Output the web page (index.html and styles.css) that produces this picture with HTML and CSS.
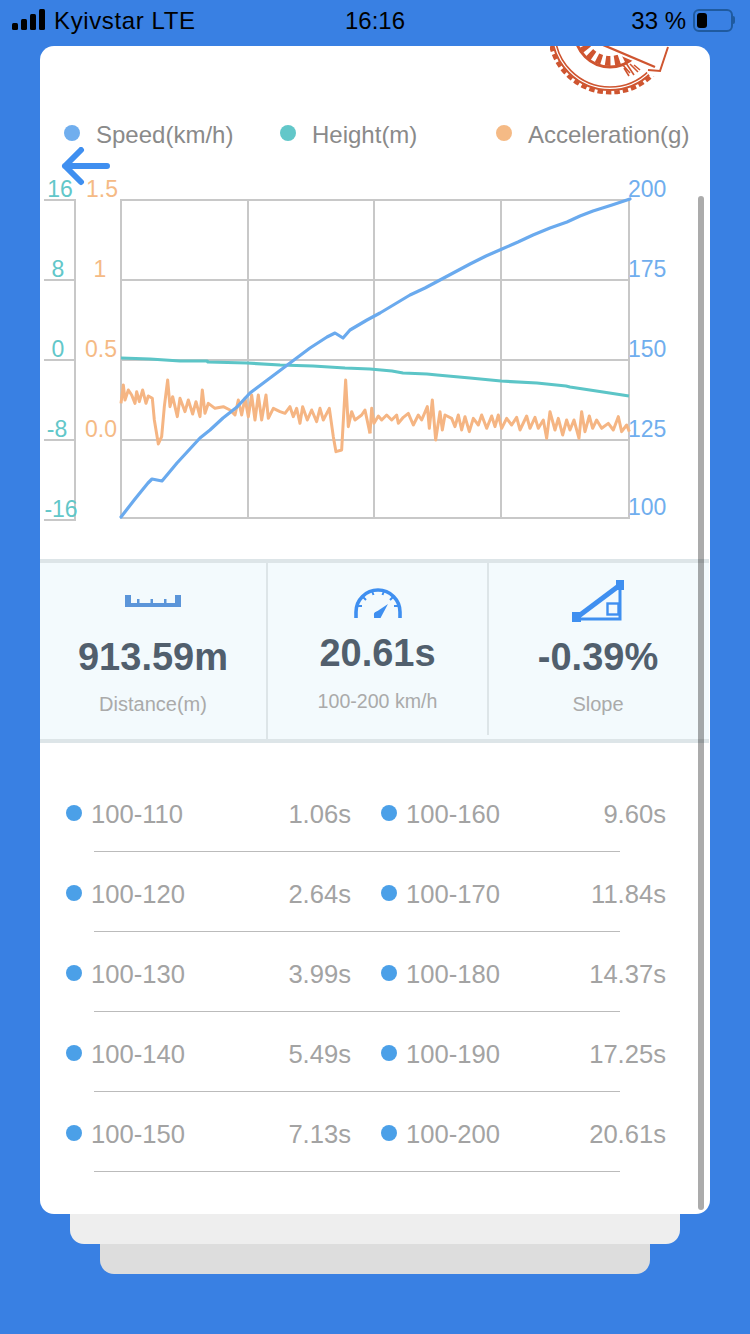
FILE: index.html
```html
<!DOCTYPE html>
<html lang="en">
<head>
<meta charset="utf-8">
<title>Run result</title>
<link rel="stylesheet" href="styles.css">
</head>
<body>
<header class="status">
  <div class="status-left">
    <span class="signal"><i class="b1"></i><i class="b2"></i><i class="b3"></i><i class="b4"></i></span>
    <span class="carrier">Kyivstar LTE</span>
  </div>
  <div class="clock">16:16</div>
  <div class="status-right">
    <span class="percent">33 %</span>
    <span class="battery"><i class="battery-fill"></i></span>
    <i class="battery-nub"></i>
  </div>
</header>

<main class="card">
  <svg class="stamp" viewBox="550 46 130 50" aria-hidden="true">
    <circle class="st-serr" cx="610" cy="32" r="60.5"/>
    <circle class="st-ring" cx="610" cy="32" r="58"/>
    <circle class="st-thin" cx="610" cy="32" r="55"/>
    <circle class="st-inner" cx="610" cy="32" r="35"/>
    <circle class="st-rays" cx="610" cy="32" r="29"/>
    <path class="st-band" d="M596 40 L600 40 L680 40 L680 76 L650 76 L640 64 L600 47 Z"/>
    <path class="st-line" d="M603 45 L655 67"/>
    <path class="st-line2" d="M668 47 L660 71 L648 70"/>
    <path class="st-frag" d="M622 64 L630 73 M626 63 L634 75 M630 64 L638 72 M634 65 L640 70 M624 68 L629 76"/>
  </svg>

  <svg class="arrow" viewBox="0 0 50 40" aria-hidden="true">
    <path class="arrow-path" d="M46 19 H4 M20 3 L4 19 L20 35"/>
  </svg>

  <div class="legend">
    <div class="legend-item"><i class="legend-dot dot-speed"></i><span>Speed(km/h)</span></div>
    <div class="legend-item"><i class="legend-dot dot-height"></i><span>Height(m)</span></div>
    <div class="legend-item"><i class="legend-dot dot-acc"></i><span>Acceleration(g)</span></div>
  </div>

  <svg class="chart" viewBox="40 150 670 385" role="img" aria-label="Speed, height and acceleration chart">
    <defs>
      <filter id="soft" x="100" y="180" width="550" height="350" filterUnits="userSpaceOnUse">
        <feGaussianBlur stdDeviation="0.55"/>
      </filter>
    </defs>
    <path class="grid" d="M44 200H75M44 280H75M44 360H75M44 440H75M44 520H75M75 199V521"/>
    <path class="grid" d="M120 200H630M120 280H630M120 360H630M120 440H630M120 518H630M121 199V519M248 199V519M374 199V519M501 199V519M629 199V519"/>

    <text class="ax-teal" x="60" y="197" text-anchor="middle">16</text>
    <text class="ax-teal" x="58" y="277" text-anchor="middle">8</text>
    <text class="ax-teal" x="58" y="357" text-anchor="middle">0</text>
    <text class="ax-teal" x="57" y="437" text-anchor="middle">-8</text>
    <text class="ax-teal" x="61" y="517" text-anchor="middle">-16</text>

    <text class="ax-orange" x="86" y="197">1.5</text>
    <text class="ax-orange" x="100" y="277" text-anchor="middle">1</text>
    <text class="ax-orange" x="85" y="357">0.5</text>
    <text class="ax-orange" x="85" y="437">0.0</text>

    <text class="ax-blue" x="628" y="197">200</text>
    <text class="ax-blue" x="628" y="277">175</text>
    <text class="ax-blue" x="628" y="357">150</text>
    <text class="ax-blue" x="628" y="437">125</text>
    <text class="ax-blue" x="628" y="515">100</text>

    <g class="soft">
      <g transform="translate(120 340) scale(0.3333)">
        <polyline class="line-acc" points="3,190 10,135 15,180 25,150 35,165 45,190 50,155 58,185 68,150 78,190 85,168 97,175 103,240 115,312 125,290 133,200 143,120 150,200 158,170 172,230 180,175 195,215 205,180 218,222 228,185 240,230 247,150 255,220 265,190 285,205 310,200 330,210 345,225 355,180 365,225 375,175 385,230 395,165 405,240 415,165 425,240 438,165 445,235 460,205 480,215 495,220 510,200 520,230 530,205 540,250 548,200 562,240 575,210 590,245 600,205 610,240 628,205 640,290 648,335 665,330 677,120 685,260 695,215 705,240 725,225 735,210 750,280"/>
      </g>
      <g transform="translate(370 340) scale(0.3333)">
        <polyline class="line-acc" points="0,280 5,205 12,250 25,228 35,240 50,225 65,240 80,225 85,250 100,232 115,220 130,255 145,225 155,240 172,200 178,265 187,180 197,300 210,215 217,270 225,225 245,235 255,260 265,225 275,270 285,230 298,275 310,235 325,255 335,225 350,265 365,228 375,260 385,225 395,265 410,235 425,255 440,232 450,270 470,228 480,265 495,232 505,265 520,240 530,295 540,215 555,270 565,235 578,285 590,240 600,270 612,240 627,295 635,215 645,275 658,228 668,265 680,240 695,265 715,250 730,270 745,230 755,275 770,255 778,275"/>
      </g>
      <polyline class="line-height" points="121,358 150,359 180,361 207,361 208,362 247,363 280,365 313,366 345,368 370,369 381,370 392,371 403,373 427,374 437,375 470,378 501,381 537,383 566,386 570,387 603,392 629,396"/>
      <polyline class="line-speed" points="121,517 135,499 148,483 152,479 162,481 177,463 200,438 210,430 223,418 237,407 250,393 270,378 290,363 310,348 327,337 335,333 343,338 350,330 367,320 380,313 395,304 410,295 425,288 440,280 455,272 470,264 486,256 502,249 518,242 533,235 550,228 567,222 580,216 593,211 612,205 630,199"/>
    </g>
  </svg>

  <section class="stats">
    <div class="stat">
      <div class="stat-icon">
        <svg class="icon-ruler" viewBox="0 0 56 12" aria-hidden="true">
          <path class="ruler-path" d="M0 0H6V8H12V4H14.5V8H25.5V4H28V8H39V4H41.5V8H50V0H56V12H0Z"/>
        </svg>
      </div>
      <div class="stat-value">913.59m</div>
      <div class="stat-label">Distance(m)</div>
    </div>
    <div class="stat stat-mid">
      <div class="stat-icon">
        <svg class="icon-gauge" viewBox="0 0 48 30" aria-hidden="true">
          <path class="gauge-arc" d="M2 30 V24 A22 22 0 0 1 46 24 V30"/>
          <path class="gauge-tick" d="M3.5 18H8M9 9L12 12M18 3L19.5 7M30 3L28.5 7M39 9L36 12M44.5 18H40"/>
          <path class="gauge-needle" d="M34 16 L26.5 30 L20 30 L20.5 25 Z"/>
          <circle class="gauge-needle" cx="23.5" cy="27" r="3.6"/>
        </svg>
      </div>
      <div class="stat-value">20.61s</div>
      <div class="stat-label">100-200 km/h</div>
    </div>
    <div class="stat stat-last">
      <div class="stat-icon">
        <svg class="icon-slope" viewBox="0 0 52 42" aria-hidden="true">
          <path class="slope-diag" d="M4 38 L48 5"/>
          <path class="slope-line" d="M48 5 V39 H4"/>
          <rect class="slope-box" x="35.5" y="23.5" width="11" height="11"/>
          <rect class="slope-cap" x="0" y="32" width="9" height="10"/>
          <rect class="slope-cap" x="44" y="0" width="8" height="10"/>
        </svg>
      </div>
      <div class="stat-value">-0.39%</div>
      <div class="stat-label">Slope</div>
    </div>
  </section>

  <section class="splits">
    <div class="split-row">
      <div class="split-cells">
        <div class="split"><i class="split-dot"></i><span>100-110</span><b>1.06s</b></div>
        <div class="split"><i class="split-dot"></i><span>100-160</span><b>9.60s</b></div>
      </div>
      <div class="split-line"></div>
    </div>
    <div class="split-row">
      <div class="split-cells">
        <div class="split"><i class="split-dot"></i><span>100-120</span><b>2.64s</b></div>
        <div class="split"><i class="split-dot"></i><span>100-170</span><b>11.84s</b></div>
      </div>
      <div class="split-line"></div>
    </div>
    <div class="split-row">
      <div class="split-cells">
        <div class="split"><i class="split-dot"></i><span>100-130</span><b>3.99s</b></div>
        <div class="split"><i class="split-dot"></i><span>100-180</span><b>14.37s</b></div>
      </div>
      <div class="split-line"></div>
    </div>
    <div class="split-row">
      <div class="split-cells">
        <div class="split"><i class="split-dot"></i><span>100-140</span><b>5.49s</b></div>
        <div class="split"><i class="split-dot"></i><span>100-190</span><b>17.25s</b></div>
      </div>
      <div class="split-line"></div>
    </div>
    <div class="split-row">
      <div class="split-cells">
        <div class="split"><i class="split-dot"></i><span>100-150</span><b>7.13s</b></div>
        <div class="split"><i class="split-dot"></i><span>100-200</span><b>20.61s</b></div>
      </div>
      <div class="split-line"></div>
    </div>
  </section>

  <div class="scrollbar"></div>
</main>
<div class="layer layer-one"></div>
<div class="layer layer-two"></div>
</body>
</html>
```
FILE: styles.css
```css
* { box-sizing: border-box; }
html, body { margin: 0; padding: 0; }
body {
  width: 750px;
  height: 1334px;
  overflow: hidden;
  background: #3980e3;
  font-family: "Liberation Sans", Arial, sans-serif;
}
i { display: block; font-style: normal; }

/* status bar */
.status {
  height: 46px;
  position: relative;
  display: flex;
  justify-content: space-between;
  padding: 9px 15px 0 12px;
  color: #000;
  font-size: 24px;
  line-height: 24px;
}
.status-left { display: flex; align-items: flex-start; }
.signal { display: flex; align-items: flex-end; gap: 3px; height: 21px; width: 33px; }
.signal i { width: 6px; background: #000; border-radius: 1.5px; }
.b1 { height: 7px; }
.b2 { height: 11px; }
.b3 { height: 16px; }
.b4 { height: 21px; }
.carrier { margin-left: 9px; letter-spacing: 0.62px; }
.clock { position: absolute; left: 345px; top: 9px; }
.status-right { display: flex; align-items: flex-start; }
.percent { margin-right: 7px; }
.battery {
  width: 40px;
  height: 23px;
  border: 2px solid #1f5a9f;
  border-radius: 6px;
  padding: 2px;
}
.battery-fill { width: 10px; height: 15px; background: #000; border-radius: 3px; }
.battery-nub { width: 2px; height: 8px; margin-top: 7px; background: #1f5a9f; border-radius: 0 2px 2px 0; }

/* main card */
.card {
  position: relative;
  z-index: 3;
  width: 670px;
  height: 1168px;
  margin-left: 40px;
  padding-top: 74px;
  background: #fff;
  border-radius: 14px;
  overflow: hidden;
}
.stamp { position: absolute; left: 510px; top: 0; width: 130px; height: 50px; }
.st-serr { fill: none; stroke: #cf5530; stroke-width: 4; stroke-dasharray: 5.5 3; }
.st-ring { fill: none; stroke: #cf5530; stroke-width: 2; }
.st-thin { fill: none; stroke: #cf5530; stroke-width: 1.6; }
.st-inner { fill: none; stroke: #cf5530; stroke-width: 3; }
.st-rays { fill: none; stroke: #cf5530; stroke-width: 10; stroke-dasharray: 5 4; }
.st-band { fill: #fff; }
.st-line { fill: none; stroke: #cf5530; stroke-width: 2.4; }
.st-line2 { fill: none; stroke: #cf5530; stroke-width: 2; }
.st-frag { fill: none; stroke: #cf5530; stroke-width: 1.6; }

.arrow { position: absolute; left: 21px; top: 101px; width: 50px; height: 40px; }
.arrow-path { fill: none; stroke: #3f8ff0; stroke-width: 6; stroke-linecap: round; stroke-linejoin: round; }

.legend {
  display: grid;
  grid-template-columns: 216px 216px 216px;
  padding-left: 24px;
  font-size: 24px;
  line-height: 30px;
  color: #8a8a8a;
}
.legend-item { display: flex; align-items: center; gap: 16px; white-space: nowrap; }
.legend-dot { width: 16px; height: 16px; border-radius: 50%; margin-top: -4px; }
.dot-speed { background: #70aeee; }
.dot-height { background: #62c7c9; }
.dot-acc { background: #f5ba85; }

/* chart */
.chart { display: block; width: 670px; height: 385px; }
.grid { fill: none; stroke: #c8c8c8; stroke-width: 2; }
.ax-teal, .ax-orange, .ax-blue { font-size: 23px; }
.ax-teal { fill: #62c7c9; }
.ax-orange { fill: #f5ba85; }
.ax-blue { fill: #70aeee; }
.soft { filter: url(#soft); }
.line-acc { fill: none; stroke: #f5b583; stroke-width: 9; stroke-linejoin: round; }
.line-height { fill: none; stroke: #5cc5c7; stroke-width: 3.2; stroke-linejoin: round; }
.line-speed { fill: none; stroke: #6aaaee; stroke-width: 3.2; stroke-linejoin: round; stroke-linecap: round; }

/* stats band */
.stats {
  display: grid;
  grid-template-columns: 226px 221px 222px;
  width: 669px;
  height: 184px;
  margin-top: 24px;
  background: #f3fafd;
  border-top: 4px solid #dde5e8;
  border-bottom: 4px solid #dde5e8;
}
.stat {
  display: flex;
  flex-direction: column;
  align-items: center;
  padding-top: 16px;
}
.stat-mid { border-left: 2px solid #dde5e8; }
.stat-last { position: relative; }
.stat-last::before {
  content: "";
  position: absolute;
  left: 0;
  top: 0;
  width: 2px;
  height: 172px;
  background: #dde5e8;
}
.stat-icon { height: 43px; display: flex; align-items: center; justify-content: center; }
.stat-value {
  margin-top: 14px;
  font-size: 38px;
  line-height: 42px;
  font-weight: 700;
  color: #515f6d;
}
.stat-mid .stat-value { margin-top: 10px; }
.stat-label {
  margin-top: 14px;
  font-size: 20px;
  line-height: 24px;
  color: #aaa;
}
.stat-mid .stat-label { margin-top: 15px; font-size: 19.6px; }
.icon-ruler { display: block; width: 56px; height: 12px; }
.ruler-path { fill: #5b95d9; }
.icon-gauge { display: block; width: 48px; height: 30px; margin-top: 4px; }
.gauge-arc { fill: none; stroke: #3f8ff0; stroke-width: 3.6; }
.gauge-tick { fill: none; stroke: #3f8ff0; stroke-width: 2; }
.gauge-needle { fill: #3f8ff0; }
.icon-slope { display: block; width: 52px; height: 42px; }
.slope-diag { fill: none; stroke: #3f8ff0; stroke-width: 5; }
.slope-line { fill: none; stroke: #3f8ff0; stroke-width: 3; }
.slope-box { fill: none; stroke: #3f8ff0; stroke-width: 2.4; }
.slope-cap { fill: #3f8ff0; }

/* split times */
.splits { padding-top: 56px; }
.split-row { height: 80px; }
.split-cells {
  display: grid;
  grid-template-columns: 285px 285px;
  gap: 30px;
  margin-left: 26px;
}
.split {
  display: flex;
  align-items: center;
  height: 30px;
  font-size: 25.6px;
  line-height: 30px;
  color: #a3a3a3;
}
.split b { font-weight: 400; margin-left: auto; }
.split-dot {
  width: 16px;
  height: 16px;
  margin: -2px 9px 0 0;
  border-radius: 50%;
  background: #4ba0e8;
}
.split-line { height: 1px; margin: 22px 90px 0 54px; background: #bbb; }

.scrollbar {
  position: absolute;
  left: 658px;
  top: 150px;
  width: 6px;
  height: 1014px;
  border-radius: 3px;
  background: rgba(0, 0, 0, 0.33);
}

/* stacked cards behind */
.layer { position: relative; height: 30px; border-radius: 0 0 14px 14px; }
.layer-one { z-index: 2; width: 610px; margin-left: 70px; background: #eee; }
.layer-two { z-index: 1; width: 550px; margin-left: 100px; background: #ddd; }
```
